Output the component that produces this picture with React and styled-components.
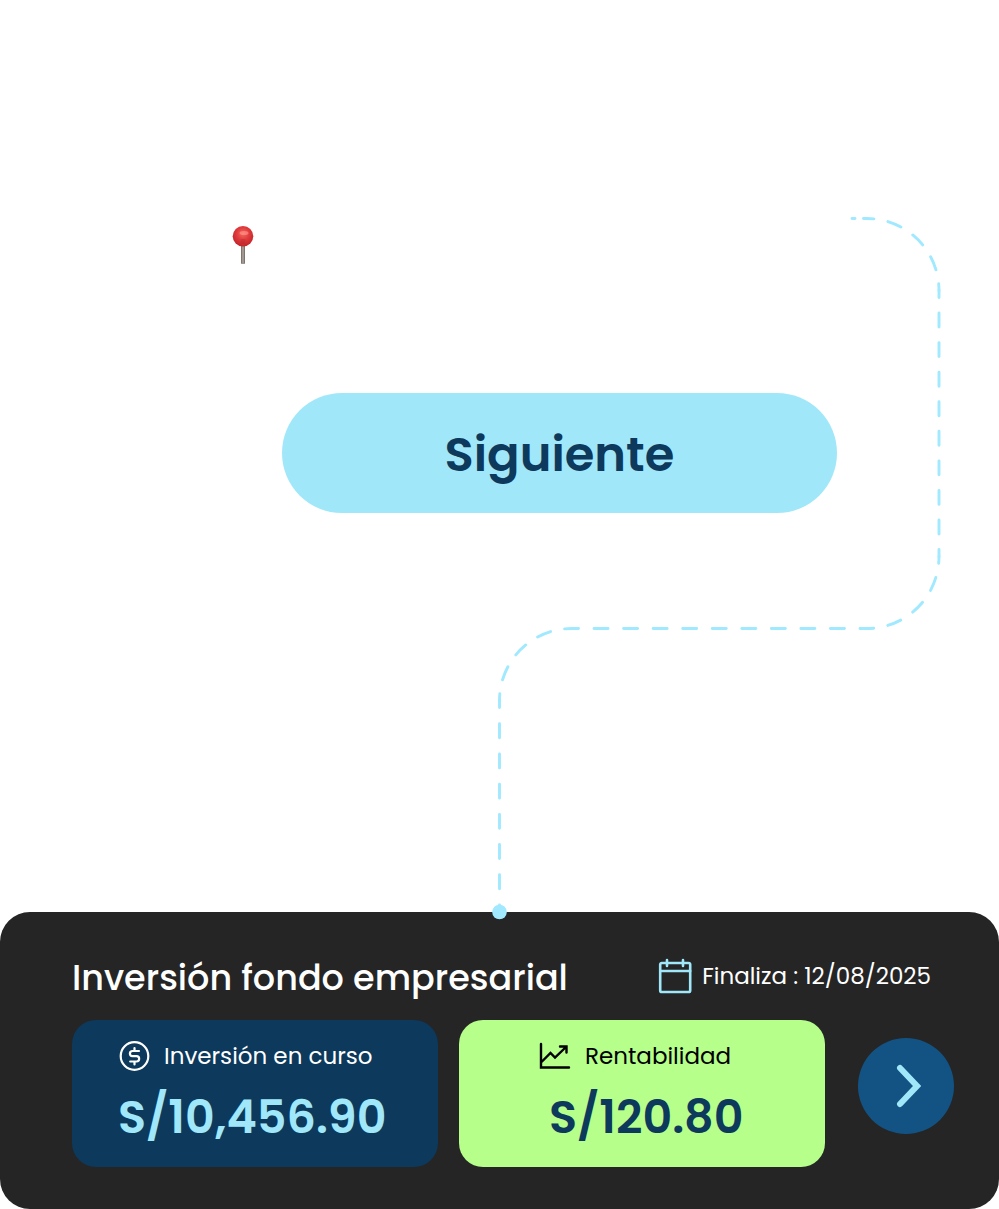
import React from "react";
import styled, { createGlobalStyle } from "styled-components";

const GlobalStyle = createGlobalStyle`
  *, *::before, *::after { box-sizing: border-box; }
  body {
    margin: 0;
    background: #fff;
    font-family: Poppins, Inter, "Liberation Sans", sans-serif;
  }
  button { font-family: inherit; border: 0; padding: 0; cursor: pointer; }
  h2, p { margin: 0; font-weight: inherit; }
  svg { display: block; flex: none; }
`;

const Page = styled.main`
  width: 100%;
`;

const Scene = styled.section`
  position: relative;
  height: 912px;
  padding: 225px 16.2% 0 28.2%;
`;

const Pin = styled.svg`
  width: 22px;
  height: 40px;
  margin: 0 0 128px -50px;
`;

const NextButton = styled.button`
  display: block;
  width: 100%;
  height: 120px;
  padding-top: 4px;
  border-radius: 60px;
  background: #a1e7fa;
  color: #0d395c;
  font-size: 48px;
  font-weight: 600;
  line-height: 60px;
`;

const Connector = styled.svg`
  position: absolute;
  left: calc(50% - 8px);
  bottom: 0;
  width: 450px;
  height: 712px;
  pointer-events: none;
`;

const Card = styled.section`
  padding: 44px 45px 42px 72px;
  border-radius: 30px;
  background: #252525;
  color: #fff;
`;

const CardHeader = styled.header`
  display: flex;
  align-items: center;
  justify-content: space-between;
  height: 44px;
  margin: 0 23px 20px 0;
`;

const Title = styled.h2`
  font-size: 35px;
  line-height: 44px;
  font-weight: 500;
  white-space: nowrap;
`;

const Deadline = styled.p`
  display: flex;
  align-items: center;
  gap: 10px;
  padding-bottom: 4px;
  font-size: 23px;
  line-height: 32px;
  font-weight: 400;
  white-space: nowrap;
`;

const CardBody = styled.div`
  display: flex;
  align-items: flex-start;
  gap: 33px;
`;

const Tiles = styled.div`
  flex: 1;
  display: grid;
  grid-template-columns: 1fr 1fr;
  gap: 21px;
`;

const Tile = styled.div`
  height: 147px;
  padding: 18px 0 0 ${(p) => p.$inset}px;
  border-radius: 24px;
  background: ${(p) => p.$background};
  color: ${(p) => p.$color};
`;

const TileLabel = styled.p`
  display: flex;
  align-items: center;
  gap: 14px;
  font-size: 23px;
  line-height: 36px;
  white-space: nowrap;
`;

const Amount = styled.p`
  margin-top: 13px;
  padding-left: ${(p) => p.$indent || 0}px;
  color: ${(p) => p.$color};
  font-size: 46px;
  line-height: 60px;
  font-weight: 600;
  white-space: nowrap;
`;

const RoundButton = styled.button`
  display: grid;
  place-items: center;
  flex: none;
  width: 96px;
  height: 96px;
  margin-top: 18px;
  border-radius: 50%;
  background: #135383;
`;

const SEGMENTS = [
  { d: "M360.5 18.5H375.5", dash: "3 8.5 4 0", offset: 0 },
  { d: "M375.5 18.5A72 72 0 0 1 447.5 90.5", dash: "14 14.27", offset: 7 },
  { d: "M447.5 90.5V356.5", dash: "14 15.56", offset: 7 },
  { d: "M447.5 356.5A72 72 0 0 1 375.5 428.5", dash: "14 14.27", offset: 7 },
  { d: "M375.5 428.5H80", dash: "14 15.55", offset: 7 },
  { d: "M80 428.5A72 72 0 0 0 8 500.5", dash: "14 14.27", offset: 7 },
  { d: "M8 500.5V712", dash: "14 16.21", offset: 7 },
];

function ConnectorLine() {
  return (
    <Connector viewBox="0.5 0 450 712" overflow="visible" aria-hidden="true">
      <g fill="none" stroke="#a0e9ff" strokeWidth="2.9" strokeLinecap="round">
        {SEGMENTS.map((s) => (
          <path key={s.d} d={s.d} strokeDasharray={s.dash} strokeDashoffset={s.offset} />
        ))}
      </g>
      <circle cx="8" cy="712" r="7.3" fill="#a0e9ff" />
    </Connector>
  );
}

function PinIcon() {
  return (
    <Pin viewBox="0 0 22 40" role="img" aria-label="Pin">
      <defs>
        <radialGradient id="head" cx="0.5" cy="0.38" r="0.62">
          <stop offset="0" stopColor="#f4685f" />
          <stop offset="0.5" stopColor="#e03a3c" />
          <stop offset="1" stopColor="#bf2429" />
        </radialGradient>
        <linearGradient id="needle">
          <stop offset="0" stopColor="#6d625c" />
          <stop offset="0.5" stopColor="#b5aaa2" />
          <stop offset="1" stopColor="#6b625d" />
        </linearGradient>
      </defs>
      <rect x="9" y="19" width="4" height="20" rx="1" fill="url(#needle)" />
      <circle cx="11" cy="11.2" r="10.3" fill="url(#head)" />
      <ellipse cx="12" cy="8" rx="4.5" ry="2" fill="#ff9b8c" opacity="0.6" />
      <rect x="8.5" y="14" width="5" height="5" rx="1" fill="#b0282c" opacity="0.35" />
    </Pin>
  );
}

function CalendarIcon() {
  return (
    <svg width="34" height="36" viewBox="0 0 34 36" fill="none" stroke="#a1e7fa" strokeWidth="2.6" strokeLinecap="round" aria-hidden="true">
      <rect x="2.2" y="5" width="30" height="29" rx="1.6" />
      <path d="M2.2 13H32.2M9 2V8M25 2V8" />
    </svg>
  );
}

function CoinIcon() {
  return (
    <svg width="32" height="32" viewBox="0 0 32 32" fill="none" stroke="#fff" strokeWidth="2.2" strokeLinecap="round" strokeLinejoin="round" aria-hidden="true">
      <circle cx="16.5" cy="16" r="13.8" />
      <path d="M16.5 8V11M16.5 21.5V24.5M21 11H14.5a2.6 2.6 0 0 0 0 5.2h4a2.6 2.6 0 0 1 0 5.3h-6.3" />
    </svg>
  );
}

function TrendIcon() {
  return (
    <svg width="32" height="28" viewBox="0 0 32 28" fill="none" stroke="#000" strokeWidth="2.4" strokeLinecap="round" aria-hidden="true">
      <path d="M2 2V25.5H30M2.5 20L11.5 11L16 15.5L27 5M21 4.5H27.5V10.5" />
    </svg>
  );
}

function ChevronIcon() {
  return (
    <svg width="30" height="44" viewBox="0 0 30 44" fill="none" stroke="#a1e7fa" strokeWidth="6" strokeLinecap="round" strokeLinejoin="miter" aria-hidden="true">
      <path d="M9 4L26 22L9 40" />
    </svg>
  );
}

export default function App() {
  return (
    <Page>
      <GlobalStyle />
      <Scene>
        <PinIcon />
        <NextButton type="button">Siguiente</NextButton>
        <ConnectorLine />
      </Scene>
      <Card>
        <CardHeader>
          <Title>Inversión fondo empresarial</Title>
          <Deadline>
            <CalendarIcon />
            <span>Finaliza : 12/08/2025</span>
          </Deadline>
        </CardHeader>
        <CardBody>
          <Tiles>
            <Tile $background="#0d395c" $color="#fff" $inset={46}>
              <TileLabel>
                <CoinIcon />
                Inversión en curso
              </TileLabel>
              <Amount $color="#a1e7fa">S/10,456.90</Amount>
            </Tile>
            <Tile $background="#b5ff8a" $color="#000" $inset={80}>
              <TileLabel>
                <TrendIcon />
                Rentabilidad
              </TileLabel>
              <Amount $color="#0d395c" $indent={10}>S/120.80</Amount>
            </Tile>
          </Tiles>
          <RoundButton type="button" aria-label="Ver inversión">
            <ChevronIcon />
          </RoundButton>
        </CardBody>
      </Card>
    </Page>
  );
}
